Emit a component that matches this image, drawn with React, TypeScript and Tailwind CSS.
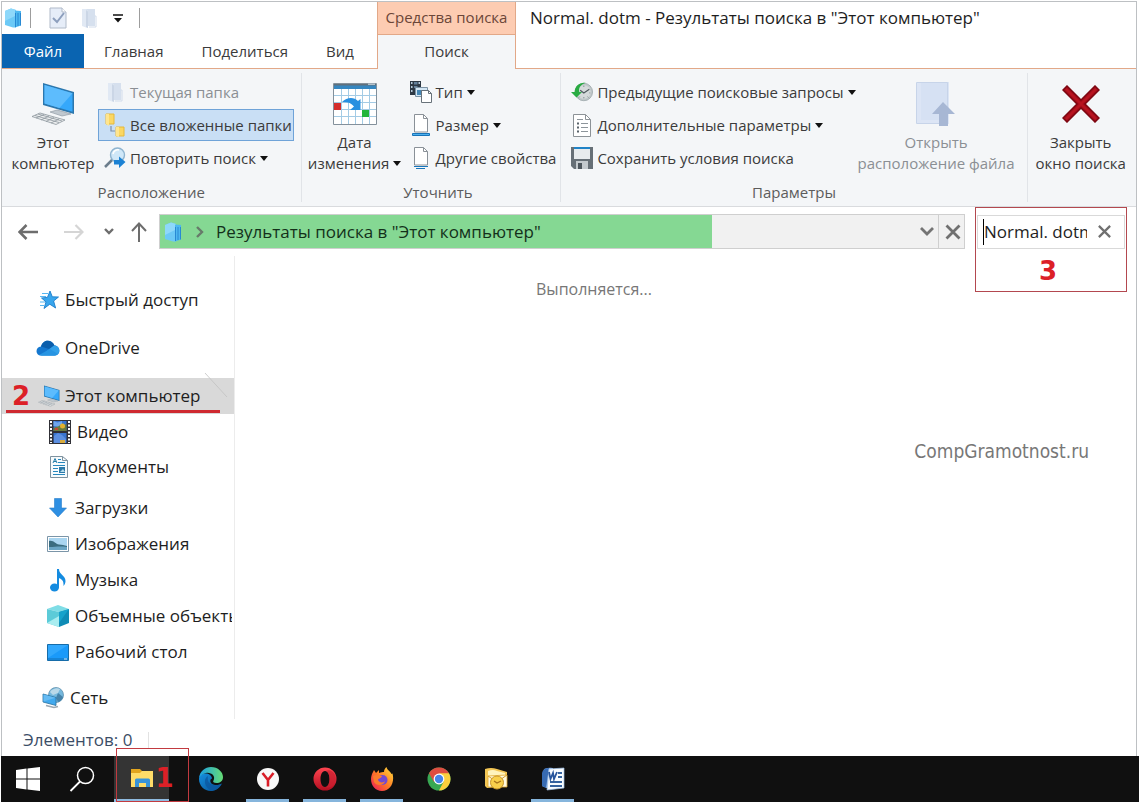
import React from "react";

type IconProps = { className?: string };

const Cube = ({ className = "h-5 w-5" }: IconProps) => (
  <svg viewBox="0 0 18 20" className={className} aria-hidden="true">
    <path d="M1 3 7 .5l5 1.500v17.500L9 19.500 1 17z" fill="#6cc9f6" />
    <path d="M1 3 7 .5l5 1.500L11 8 1 13z" fill="#8ed8fa" />
    <path d="M11 2.500 17 3v14.500l-6 2z" fill="#4db8f0" />
    <path d="M11.500 5v14M14 5v13M16.500 5v12.500" stroke="#1f7ccb" strokeWidth=".8" />
  </svg>
);

const CheckPage = () => (
  <svg viewBox="0 0 18 22" className="h-[22px] w-[18px]" aria-hidden="true">
    <path d="M1 1h12l4 4v16H1z" fill="#e6edf8" stroke="#b0bac9" />
    <path d="M13 1v4h4" fill="#fff" stroke="#b0bac9" />
    <path d="m4 11 4 4 7-9" fill="none" stroke="#8d9fbd" strokeWidth="2" />
  </svg>
);

const PaleFolder = ({ className = "h-5 w-4" }: IconProps) => (
  <svg viewBox="0 0 16 20" className={className} aria-hidden="true">
    <path d="M3 1h11v17H3z" fill="#d6e0ee" />
    <path d="M1 1h4l2 2v17l-2-.500-4-1.500z" fill="#e1e9f4" />
    <path d="M5 2 7 3.500V20l-2-1z" fill="#cbd6e6" />
    <path d="M14 8h1v11H8" fill="none" stroke="#d2dceb" />
  </svg>
);

const Caret = () => (
  <svg viewBox="0 0 8 5" className="h-[5px] w-2 shrink-0" aria-hidden="true">
    <path d="M0 0h8L4 5z" fill="#111" />
  </svg>
);

const Computer = ({ className = "h-11 w-11" }: IconProps) => (
  <svg viewBox="0 0 44 44" className={className} aria-hidden="true">
    <path d="m12 1 31 9v22l-31-9z" fill="#2c77ad" />
    <path d="m13.500 3 28 8.200v18.600l-28-8.200z" fill="#35a8fb" />
    <path d="m13.500 3 28 8.200-13 14.800-15-4.400z" fill="#5dbcfd" />
    <path d="m26 28-7 2 12 4 9-2-8-2.500z" fill="#c0c8cf" stroke="#89949d" strokeWidth=".6" />
    <path d="m9 31 25 7-9 4.500L1 34.500z" fill="#eceeef" stroke="#8c969d" strokeWidth=".8" />
    <path d="m7 32 24 7M4 33.500l24 7M13 32.500l-8 3.500M18 34l-8 4M23 35.500l-8 4M28 37l-8 4" stroke="#8c969d" strokeWidth=".8" />
  </svg>
);

const Subfolders = () => (
  <svg viewBox="0 0 22 26" className="h-[26px] w-[22px]" aria-hidden="true">
    <path d="M2 2h8v10H2zM12 15h8v9h-8z" fill="#fbd763" stroke="#e6b93a" />
    <path d="M2 2h3v12l-3-2zM12 15h3v10l-3-1z" fill="#ffe58e" />
    <path d="M7 14v5h4" fill="none" stroke="#7d8fa8" strokeWidth="1.200" />
  </svg>
);

const SearchAgain = () => (
  <svg viewBox="0 0 22 22" className="h-[22px] w-[22px]" aria-hidden="true">
    <path d="m1 20 8-8" stroke="#6b7d8c" strokeWidth="2.500" />
    <circle cx="13.500" cy="8" r="7" fill="#cfe7f8" stroke="#8fb4d0" strokeWidth="1.400" />
    <path d="M9 7a5 5 0 0 1 6-4" stroke="#fff" strokeWidth="1.500" fill="none" />
    <path d="M10 13h5v-3.500l6.500 5.500-6.500 6v-3.500h-5z" fill="#1c82d4" />
  </svg>
);

const CalendarIcon = () => (
  <svg viewBox="0 0 44 42" className="h-[42px] w-11" aria-hidden="true">
    <path d="M.5.500h43v41H.500z" fill="#fff" stroke="#83909b" />
    <path d="M1 1h42v5H1z" fill="#3586c0" />
    <path d="M1 1h42v1.500H1z" fill="#60707c" />
    <path d="M35 1.200h7" stroke="#dbe6ee" strokeWidth="1" />
    <path d="M8.500 6v35M15.500 6v35M22.500 6v35M29.500 6v35M36.500 6v35M1 12.500h42M1 19.500h42M1 26.500h42M1 33.500h42" stroke="#a3cbe5" />
    <path d="M1 20h7v7H1z" fill="#d42d2c" />
    <path d="M29 27h7v7h-7z" fill="#22b53a" />
    <path d="M9 19c5-5 12-5 16-1l2.500-2v11H17l4-3.500c-3-4-7-5-12-4.500z" fill="#2990e0" />
  </svg>
);

const TypeIcon = () => (
  <svg viewBox="0 0 22 22" className="h-[22px] w-[22px]" aria-hidden="true">
    <path d="M0 0h11v14H0z" fill="#2d3844" />
    <path d="M1 1h1.500v2H1zm0 4h1.500v2H1zm0 4h1.500v2H1zm7.500-8H10v2H8.500z" fill="#b8ccdb" />
    <path d="M4 1h3.500v2.500H4zm0 4h3.500v2H4z" fill="#63809b" />
    <path d="M5.500 6.500h12v9h-12z" fill="#d3e6f4" stroke="#7b92a4" />
    <path d="M7 9h5v5H7z" fill="#4687b4" />
    <path d="M11.500 9.500h7l3 3v9h-10z" fill="#fff" stroke="#68727a" />
    <path d="M18.500 9.500v3h3" fill="none" stroke="#68727a" />
  </svg>
);

const PageLines = ({ lines }: { lines: boolean }) => (
  <svg viewBox="0 0 18 23" className="h-[23px] w-[18px]" aria-hidden="true">
    <path d="M2.500.500h9l4 4v13.500h-13z" fill="#fff" stroke="#8a9198" />
    <path d="M11.500.500v4h4" fill="none" stroke="#8a9198" />
    {lines ? (
      <path d="M2 19.500h14M4 21.500h9" stroke="#1976bb" />
    ) : (
      <path d="M.5 19.500h17v2H.500z" fill="#4db1ef" stroke="#1773b8" />
    )}
  </svg>
);

const HistoryIcon = () => (
  <svg viewBox="0 0 24 22" className="h-[22px] w-6" aria-hidden="true">
    <circle cx="14" cy="11" r="9.500" fill="#c0c8ca" stroke="#a3adb0" />
    <circle cx="14" cy="11" r="7.500" fill="#d5dadb" />
    <path d="m10 9 4 3 6-4" stroke="#4e595e" strokeWidth="1.300" fill="none" />
    <path d="M14 4v1.500M14 16.500V18M20 12h1M18 16l1 1M9.500 16l-1 1" stroke="#7b8589" fill="none" />
    <path d="M0 11h4C4 4 10 0 16 1 11 3 8 6 9 11h3l-6 6z" fill="#29ab43" />
  </svg>
);

const ListPage = () => (
  <svg viewBox="0 0 18 23" className="h-[23px] w-[18px]" aria-hidden="true">
    <path d="M.5.500h12l5 5v17H.500z" fill="#fff" stroke="#8c9297" />
    <path d="M12.500.500v5h5" fill="none" stroke="#8c9297" />
    <path d="M4 5.500h6M8 9.500h7M8 13.500h7M8 17.500h7" stroke="#8d959b" />
    <path d="M4 8.500h2v2H4zM4 12.500h2v2H4zM4 16.500h2v2H4z" fill="#59636b" />
  </svg>
);

const Floppy = () => (
  <svg viewBox="0 0 22 22" className="h-[22px] w-[22px]" aria-hidden="true">
    <path d="M0 0h22v22H3l-3-3z" fill="#666f76" />
    <path d="M3 0h16v12H3z" fill="#e7ebed" />
    <path d="M3 0h16v2H3z" fill="#2083c7" />
    <path d="M5 14h12v8H5z" fill="#c3c9cd" />
    <path d="M7 16h4v6H7z" fill="#4d565d" />
  </svg>
);

const OpenLocation = () => (
  <svg viewBox="0 0 40 46" className="h-[46px] w-10" aria-hidden="true">
    <path d="M1 1h32v42H1z" fill="#dce5f5" />
    <path d="M5 1h27v38H5z" fill="#d6e1f3" />
    <path d="M.5 1.500h31v41H.500z" fill="none" stroke="#c7d4e9" />
    <path d="M27 21 39 33h-7v12h-9V33h-7z" fill="#a7b7d4" />
  </svg>
);

const RedCross = () => (
  <svg viewBox="0 0 38 38" className="h-[38px] w-[38px]" aria-hidden="true">
    <path d="m5 1 14 14L33 1l4 4-14 14 14 14-4 4-14-14L5 37l-4-4 14-14L1 5z" fill="#a80d1b" stroke="#7c0711" strokeWidth="1.500" />
    <path d="m4 4 30 30M34 4 4 34" stroke="#b81521" strokeWidth="2" />
  </svg>
);

const Star = () => (
  <svg viewBox="0 0 20 20" className="h-5 w-5" aria-hidden="true">
    <path d="m11 1 2.300 5.800 6.200.200-4.900 4 2 7-5.800-3.800L5 18.500l2-6.600L2.500 8l6-.700z" fill="#38a6ed" stroke="#1b7dcb" strokeWidth=".9" />
    <path d="M3 3.500h6M1 6.500h6M1 12h5M1 15.500h4" stroke="#56b7f2" strokeWidth="1.200" />
  </svg>
);

const Cloud = () => (
  <svg viewBox="0 0 24 16" className="h-4 w-6" aria-hidden="true">
    <path d="M5 15.500C-1 15.500-1 7 5 6.500 7-1 16-1 18.500 5.500c6 0 7 10 0 10z" fill="#1477cf" />
    <path d="M5 6.500C7-1 16-1 18.500 5.500L13 9z" fill="#0b5eab" />
    <path d="m5 15.500 13-10c7 0 7 10 0 10z" fill="#32a0e9" />
    <path d="m3 15 11-6 8 5q-1 1.500-4 1.500H5z" fill="#2794e2" />
  </svg>
);

const Film = () => (
  <svg viewBox="0 0 22 24" className="h-6 w-[22px]" aria-hidden="true">
    <path d="M0 0h22v24H0z" fill="#303036" />
    <path d="M4.500 1h13v10h-13zM4.500 13h13v10h-13z" fill="#3974d0" />
    <path d="M4.500 8 9 6l4-3 2 2 2.500-1v7h-13z" fill="#687b3f" />
    <path d="m4.500 1 4 1.500L13 1v3L9 6.500 4.500 6z" fill="#6fa6ec" />
    <circle cx="13.500" cy="6" r="2.500" fill="#e3b330" />
    <path d="M6 8h3v2H6z" fill="#c74637" />
    <path d="M5 16l4-3 4 2 4 4v4H5z" fill="#5c8fe0" />
    <path d="M11 20h5v3h-5z" fill="#d8ab3d" />
    <path d="M2 1v22M20 1v22" stroke="#fff" strokeWidth="2" strokeDasharray="2 1.500" />
  </svg>
);

const DocumentIcon = () => (
  <svg viewBox="0 0 18 22" className="h-[22px] w-[18px]" aria-hidden="true">
    <path d="M.5.500h12l5 4v17H.500z" fill="#f7fbfd" stroke="#7e929f" />
    <path d="M12.500.500v4h5" fill="none" stroke="#7e929f" />
    <path d="M8 3.500h3M8 6.500h7M3 9.500h12M3 12.500h5M3 15.500h5M3 18.500h12" stroke="#2788be" />
    <path d="m3 7 2-4.500L7 7M4 5.500h2" fill="none" stroke="#247da9" />
    <path d="M9 11h6v6H9z" fill="#2d79a8" />
    <path d="m10 16 3-3 2 3z" fill="#b6dcec" />
  </svg>
);

const DownArrow = () => (
  <svg viewBox="0 0 18 20" className="h-5 w-[18px]" aria-hidden="true">
    <path d="M5.500.500h7V10h5L9 19 .500 10h5z" fill="#2e8fe2" stroke="#277dcb" strokeWidth=".6" />
  </svg>
);

const Picture = () => (
  <svg viewBox="0 0 22 16" className="h-4 w-[22px]" aria-hidden="true">
    <path d="M.5.500h21v15H.500z" fill="#fff" stroke="#7b95a8" />
    <path d="M2 2h18v12H2z" fill="#a9d5f0" />
    <path d="M2 5c5-1 6 3 10 3.500 3 0 5 1 8 1.500v2H2z" fill="#3a6c7f" />
    <path d="M2 11c7 0 10-1 18 0v3H2z" fill="#6aa5c4" />
  </svg>
);

const Note = () => (
  <svg viewBox="0 0 16 23" className="h-[23px] w-4" aria-hidden="true">
    <ellipse cx="4.500" cy="18.500" rx="4.500" ry="4" fill="#148be0" />
    <path d="M7 0h2c0 6 6.500 6 6.500 12 0 2-1 4-2 5C14 11 11 10 9 9v9.500H7z" fill="#148be0" />
  </svg>
);

const Box3D = () => (
  <svg viewBox="0 0 22 22" className="h-[22px] w-[22px]" aria-hidden="true">
    <path d="M0 4 11 0l11 4-10 3z" fill="#7fdde6" />
    <path d="m0 4 12 3v15L0 18z" fill="#5ccbd8" />
    <path d="m0 18 12-7v11z" fill="#a9edf0" />
    <path d="m12 7 10-3v14l-10 4z" fill="#0f8cb6" />
    <path d="m12 7 10-3-10 14z" fill="#16a2cb" />
  </svg>
);

const Desktop = () => (
  <svg viewBox="0 0 22 17" className="h-[17px] w-[22px]" aria-hidden="true">
    <path d="M.5.500h21v16H.500z" fill="#1a9afa" stroke="#166ca9" />
    <path d="M1 1h20L1 14z" fill="#31a8fd" />
    <path d="M1 15h20" stroke="#1270b5" />
    <path d="M17 15h3" stroke="#d3e8f5" />
  </svg>
);

const Network = () => (
  <svg viewBox="0 0 22 22" className="h-[22px] w-[22px]" aria-hidden="true">
    <circle cx="14" cy="8" r="7.500" fill="#75b8dd" stroke="#5486a5" strokeWidth=".7" />
    <path d="M8 5c3-4 7-4.500 10-3l-2 4-5 2z" fill="#b9d8e8" />
    <path d="m16 6 5 4q-1 4-5 5l-2-4z" fill="#4683aa" />
    <path d="m1 7 13 3.500v8L1 15z" fill="#41a9ee" stroke="#28709d" strokeWidth=".8" />
    <path d="m1.500 7.500 12 3.300-12 3.700z" fill="#66bbf3" />
    <path d="m4 18.500 8 2 4-1" stroke="#9ba8b2" strokeWidth="1.500" fill="none" />
  </svg>
);

const Cross = () => (
  <svg viewBox="0 0 16 16" className="h-4 w-4" aria-hidden="true">
    <path d="m1.500 1.500 13 13M14.500 1.500l-13 13" stroke="#707070" strokeWidth="2.800" />
  </svg>
);

const Windows = () => (
  <svg viewBox="0 0 24 24" className="h-6 w-6" aria-hidden="true">
    <path d="M0 3 10.500 1.600v10H0zM11.500 1.500 24 0v11.600H11.500zM0 12.600h10.500v9.900L0 21zM11.500 12.600H24V24l-12.500-1.500z" fill="#fff" />
  </svg>
);

const TaskSearch = () => (
  <svg viewBox="0 0 26 26" className="h-[26px] w-[26px]" aria-hidden="true">
    <circle cx="16.500" cy="9.500" r="8" fill="none" stroke="#fff" strokeWidth="1.500" />
    <path d="M11 15.500 1.500 25" stroke="#fff" strokeWidth="1.800" />
  </svg>
);

const Explorer = () => (
  <svg viewBox="0 0 24 20" className="h-5 w-6" aria-hidden="true">
    <path d="M1 1h9l2 2h11v16H1z" fill="#e2a51e" />
    <path d="M1 5h9l2-2h11v16H1z" fill="#ffdc68" />
    <path d="M5 19v-7q0-1.500 1.500-1.500h12Q20 10.500 20 12v7h-4v-4H9v4z" fill="#3893d8" />
  </svg>
);

const Edge = () => (
  <svg viewBox="0 0 24 24" className="h-6 w-6" aria-hidden="true">
    <defs>
      <linearGradient id="edge-top" x1="0" x2="1">
        <stop stopColor="#199ee5" />
        <stop offset="1" stopColor="#66dc75" />
      </linearGradient>
      <linearGradient id="edge-low" x1="0" x2="1" y2="1">
        <stop stopColor="#158fe0" />
        <stop offset="1" stopColor="#075192" />
      </linearGradient>
    </defs>
    <path d="M0 12C0 9 3 6 8 6.500c3 .5 5 3 5 5-3 1-2 6 3 6.500 2.500.300 5-.500 7-1.500C20 22 16 24 12 24 5 24 0 18.500 0 12z" fill="url(#edge-low)" />
    <path d="M0 11C1 4 6 0 12 0c7 0 12 5 12 10 0 4-3 6-6.500 6-3 0-4-1-3-2.500C17 9 12 5 7 6c-3 .5-6 3-7 5z" fill="url(#edge-top)" />
    <path d="M9 9c-5 3-4 11 3 14.500 4 .5 8-2 10-6-6 2-12 0-13-4-.300-2-.300-3 0-4.500z" fill="#0b58a0" opacity=".8" />
  </svg>
);

const Yandex = () => (
  <svg viewBox="0 0 22 22" className="h-[22px] w-[22px]" aria-hidden="true">
    <circle cx="11" cy="11" r="11" fill="#f8f8f8" />
    <path d="m5.500 5 5.500 7 5.500-7M11 12v6.500" fill="none" stroke="#d91d27" strokeWidth="2.600" />
  </svg>
);

const Opera = () => (
  <svg viewBox="0 0 24 24" className="h-6 w-6" aria-hidden="true">
    <defs>
      <linearGradient id="opera-red" x2="0" y2="1">
        <stop stopColor="#ff4550" />
        <stop offset="1" stopColor="#b30e20" />
      </linearGradient>
    </defs>
    <path fillRule="evenodd" d="M12 .500a11.500 11.500 0 1 0 0 23 11.500 11.500 0 0 0 0-23zM12 4c3 0 4.500 4 4.500 8s-1.500 8-4.500 8-4.500-4-4.500-8 1.500-8 4.500-8z" fill="url(#opera-red)" />
    <path d="M13 4c3-2 7 0 9 4 2 6-1 12-7 12.500-1 0-1.500 0-2-.500 2.500-1 3.500-4.500 3.500-8S15.500 5 13 4z" fill="#c9202f" opacity=".7" />
  </svg>
);

const Firefox = () => (
  <svg viewBox="0 0 24 24" className="h-6 w-6" aria-hidden="true">
    <defs>
      <linearGradient id="fox" x1="1" x2="0" y2="1">
        <stop stopColor="#ffe33d" />
        <stop offset=".5" stopColor="#ff7a25" />
        <stop offset="1" stopColor="#ed145d" />
      </linearGradient>
    </defs>
    <path d="M3 5 4 3l2 3 3-3v3c2-1 4-1 5-1 0-2 1-4 2.500-5 .5 3 3.500 4 5 7l1-.500C25 16 20 24 12 24 3 24-2 14 3 5z" fill="url(#fox)" />
    <circle cx="12.500" cy="13" r="5" fill="#744ad1" />
    <path d="M3 9c4-2 6 0 9 0-1 3-4 2-4 4 1 3 6 3 7 1-1 5-9 5-11 1z" fill="#fa7c2d" />
  </svg>
);

const Chrome = () => (
  <svg viewBox="0 0 24 24" className="h-6 w-6" aria-hidden="true">
    <circle cx="12" cy="12" r="11.500" fill="#38a853" />
    <path d="M2 6.300a11.500 11.500 0 0 1 20 0L12 12z" fill="#de4d41" />
    <path d="M22 6.300A11.500 11.500 0 0 1 12 23.500L17 14l-5-7.700z" fill="#fbcf3d" />
    <path d="m2 6.300 5 8.700 5-8.700z" fill="#de4d41" />
    <circle cx="12" cy="12" r="5.400" fill="#fff" />
    <circle cx="12" cy="12" r="4.200" fill="#4684e9" />
  </svg>
);

const Outlook = () => (
  <svg viewBox="0 0 24 22" className="h-[22px] w-6" aria-hidden="true">
    <path d="M1 1q6-2 12 0l10 3v5l-1 9-19 2-2-2z" fill="#f3c655" />
    <path d="M4 3q5-2 9 0l8 2v6H4z" fill="#fff3bd" />
    <path d="m4 8 19-1v12H4z" fill="#fff9df" stroke="#dfa72b" strokeWidth=".8" />
    <path d="m4 8 9 6L23 7" fill="none" stroke="#d59e29" />
    <circle cx="13" cy="14.500" r="6.500" fill="#f8cf4b" stroke="#c99628" />
    <path d="m10 13 3 2 4-2" fill="none" stroke="#a6731b" strokeWidth="1.300" />
  </svg>
);

const Word = () => (
  <svg viewBox="0 0 24 24" className="h-6 w-6" aria-hidden="true">
    <path d="M3 2q5-2 9-1L8 22l-7-3z" fill="#8eb5e9" />
    <path d="M1 6q1-5 7-5L5 21l-4-2z" fill="#376bb3" />
    <path d="m8 2 15-1v20L6 23z" fill="#f8fcff" stroke="#9fbfe4" strokeWidth=".7" />
    <path d="M17 5h4v2h-4zm0 4h4v2h-4zm-8 5h12v2H9zm0 4h12v2H9z" fill="#35639f" />
    <path d="m8 5 1.500 7L12 6l1 6 3-7" fill="none" stroke="#27559d" strokeWidth="1.800" />
  </svg>
);

type RibbonItemProps = {
  icon: React.ReactNode;
  label: string;
  menu?: boolean;
  active?: boolean;
  disabled?: boolean;
};

function RibbonItem({ icon, label, menu, active, disabled }: RibbonItemProps) {
  return (
    <button
      type="button"
      disabled={disabled}
      aria-pressed={active}
      className={`flex h-8 items-center gap-1 border pr-px pl-[5px] ${
        active ? "border-[#6fa3d8] bg-[#c9dff5]" : "border-transparent"
      } ${disabled ? "text-[#8b8f94]" : "text-[#3b3b3b]"}`}
    >
      <span className="flex w-[22px] shrink-0 justify-center">{icon}</span>
      <span>{label}</span>
      {menu && <Caret />}
    </button>
  );
}

type BigButtonProps = {
  icon: React.ReactNode;
  lines: [string, string];
  menu?: boolean;
  disabled?: boolean;
};

function BigButton({ icon, lines, menu, disabled }: BigButtonProps) {
  return (
    <button
      type="button"
      disabled={disabled}
      className={`flex shrink-0 flex-col items-center leading-[21px] ${
        disabled ? "text-[#8b8f94]" : "text-[#3b3b3b]"
      }`}
    >
      <span className="flex h-14 items-center justify-center">{icon}</span>
      <span>{lines[0]}</span>
      <span className="flex items-center gap-1">
        {lines[1]}
        {menu && <Caret />}
      </span>
    </button>
  );
}

function RibbonGroup({ label, className, children }: { label: string; className: string; children: React.ReactNode }) {
  return (
    <section className={`my-1 flex flex-col border-r border-[#e1e4e8] ${className}`}>
      <div className="flex flex-1 items-start pt-[3px]">{children}</div>
      <h2 className="h-5 text-center leading-5 text-[#5c5c5c]">{label}</h2>
    </section>
  );
}

function Ribbon() {
  return (
    <div className="flex h-[138px] border-b border-[#d9dbde] bg-[#f4f6f8] text-[15px] whitespace-nowrap">
      <RibbonGroup label="Расположение" className="w-[301px]">
        <div className="flex w-[96px] justify-center pl-1.5">
          <BigButton icon={<Computer />} lines={["Этот", "компьютер"]} />
        </div>
        <div className="flex flex-col items-start gap-px">
          <RibbonItem icon={<PaleFolder />} label="Текущая папка" disabled />
          <RibbonItem icon={<Subfolders />} label="Все вложенные папки" active />
          <RibbonItem icon={<SearchAgain />} label="Повторить поиск" menu />
        </div>
      </RibbonGroup>
      <RibbonGroup label="Уточнить" className="w-[261px] [&>h2]:pl-3.5">
        <div className="flex w-[102px] justify-center pl-1">
          <BigButton icon={<CalendarIcon />} lines={["Дата", "изменения"]} menu />
        </div>
        <div className="flex flex-col items-start gap-px">
          <RibbonItem icon={<TypeIcon />} label="Тип" menu />
          <RibbonItem icon={<PageLines lines={false} />} label="Размер" menu />
          <RibbonItem icon={<PageLines lines />} label="Другие свойства" />
        </div>
      </RibbonGroup>
      <RibbonGroup label="Параметры" className="flex-1">
        <div className="flex flex-1 flex-col items-start gap-px pl-1">
          <RibbonItem icon={<HistoryIcon />} label="Предыдущие поисковые запросы" menu />
          <RibbonItem icon={<ListPage />} label="Дополнительные параметры" menu />
          <RibbonItem icon={<Floppy />} label="Сохранить условия поиска" />
        </div>
        <div className="pr-3">
          <BigButton icon={<OpenLocation />} lines={["Открыть", "расположение файла"]} disabled />
        </div>
      </RibbonGroup>
      <section className="flex w-[109px] justify-center pt-[7px] pr-0.5">
        <BigButton icon={<RedCross />} lines={["Закрыть", "окно поиска"]} />
      </section>
    </div>
  );
}

function Header() {
  const tab = "px-5 text-[#3b3b3b]";
  return (
    <header className="flex h-[67px] text-[15px] whitespace-nowrap">
      <div className="flex w-[375px] shrink-0 flex-col border-b border-[#e2a888]">
        <div className="flex h-8 items-center">
          <div className="pl-0.5">
            <Cube className="h-5 w-[18px]" />
          </div>
          <span className="ml-2 h-5 w-px bg-[#9d9d9d]" />
          <button type="button" aria-label="Свойства" className="ml-[18px]">
            <CheckPage />
          </button>
          <button type="button" aria-label="Новая папка" className="ml-3.5">
            <PaleFolder />
          </button>
          <button type="button" aria-label="Настройка панели быстрого доступа" className="ml-4">
            <svg viewBox="0 0 10 9" className="h-[9px] w-2.5" aria-hidden="true">
              <path d="M0 1h10" stroke="#111" strokeWidth="1.500" />
              <path d="M1 4h8L5 8.500z" fill="#111" />
            </svg>
          </button>
          <span className="ml-4 h-5 w-px bg-[#9d9d9d]" />
        </div>
        <nav className="flex h-[34px]">
          <button type="button" className="w-[82px] bg-[#0a64b1] text-white">Файл</button>
          <button type="button" className={tab}>Главная</button>
          <button type="button" className="px-[18px] text-[#3b3b3b]">Поделиться</button>
          <button type="button" className={tab}>Вид</button>
        </nav>
      </div>
      <div className="flex w-[139px] shrink-0 flex-col border-x border-[#e2a888]">
        <div className="h-8 bg-[#fdccb2] text-center leading-[30px] text-[#6b4638]">Средства поиска</div>
        <button type="button" className="flex-1 border-t border-[#e2a888] bg-[#f4f6f8] pb-0.5 text-[#3b3b3b]">
          Поиск
        </button>
      </div>
      <h1 className="flex-1 border-b border-[#e2a888] pl-3.5 text-[17px] leading-8 text-[#1e1e1e]">
        Normal. dotm - Результаты поиска в "Этот компьютер"
      </h1>
    </header>
  );
}

function AddressRow() {
  return (
    <div className="flex h-[49px] items-center pr-[11px] text-[17px]">
      <div className="flex w-[157px] shrink-0 items-center">
        <button type="button" aria-label="Назад" className="ml-4">
          <svg viewBox="0 0 20 16" className="h-4 w-5" fill="none" stroke="#6d6d6d" strokeWidth="2.500" aria-hidden="true">
            <path d="M20 8H2M8.500 1 1.500 8l7 7" />
          </svg>
        </button>
        <button type="button" aria-label="Вперед" className="ml-[26px]" disabled>
          <svg viewBox="0 0 20 16" className="h-4 w-5" fill="none" stroke="#d5d5d5" strokeWidth="2.200" aria-hidden="true">
            <path d="M0 8h18M11.500 1l7 7-7 7" />
          </svg>
        </button>
        <button type="button" aria-label="Последние расположения" className="ml-5">
          <svg viewBox="0 0 10 7" className="h-[7px] w-2.5" fill="none" stroke="#6d6d6d" strokeWidth="2.400" aria-hidden="true">
            <path d="m1 1 4 4 4-4" />
          </svg>
        </button>
        <button type="button" aria-label="Вверх" className="ml-4">
          <svg viewBox="0 0 18 20" className="h-5 w-[18px]" fill="none" stroke="#6d6d6d" strokeWidth="2" aria-hidden="true">
            <path d="M9 20V2M2 9l7-7.500L16 9" />
          </svg>
        </button>
      </div>
      <div className="flex h-[35px] min-w-0 flex-1 border border-[#cfcfcf] bg-[#f1f1f1]">
        <div className="flex min-w-0 flex-1 items-center">
          <div className="flex h-full w-[73%] items-center bg-[#85d893] pl-1 whitespace-nowrap text-[#13301a]">
            <Cube className="h-5 w-[18px]" />
            <svg viewBox="0 0 8 12" className="ml-3.5 h-3 w-2" fill="none" stroke="#677a6a" strokeWidth="2.400" aria-hidden="true">
              <path d="m1 1 5 5-5 5" />
            </svg>
            <span className="ml-3">Результаты поиска в "Этот компьютер"</span>
          </div>
        </div>
        <button type="button" aria-label="Показать журнал адресов" className="px-1">
          <svg viewBox="0 0 14 9" className="h-[9px] w-3.5" fill="none" stroke="#747474" strokeWidth="2.800" aria-hidden="true">
            <path d="m1 1 6 6 6-6" />
          </svg>
        </button>
        <button type="button" aria-label="Остановить" className="border-l border-[#cfcfcf] pr-[3px] pl-1.5">
          <Cross />
        </button>
      </div>
      <div className="relative ml-3 flex h-[34px] w-[148px] shrink-0 items-center border border-[#d9d9d9] pl-[5px]">
        <span className="h-[26px] w-px bg-black" />
        <input
          type="text"
          aria-label="Поиск"
          defaultValue="Normal. dotm"
          className="w-[103px] min-w-0 bg-transparent text-[#1e1e1e] outline-none"
        />
        <button type="button" aria-label="Очистить" className="ml-2.5">
          <svg viewBox="0 0 16 16" className="h-[15px] w-[15px]" aria-hidden="true">
            <path d="m2 2 12 12M14 2 2 14" stroke="#707070" strokeWidth="2.400" />
          </svg>
        </button>
        <div className="pointer-events-none absolute -top-[9px] -right-[3px] -left-[3px] flex h-[85px] items-end justify-center border border-[#b3484f] pr-1.5 pb-[3px]">
          <Marker>3</Marker>
        </div>
      </div>
    </div>
  );
}

function Marker({ children }: { children: React.ReactNode }) {
  return (
    <span className="font-['DejaVu_Sans',sans-serif] text-[26px] leading-[34px] font-bold text-[#dc2027]">{children}</span>
  );
}

function TreeItem({ icon, label, className }: { icon: React.ReactNode; label: string; className: string }) {
  return (
    <li>
      <a href="#" className={`flex items-center overflow-hidden ${className}`}>
        <span className="flex w-7 shrink-0 items-center justify-center">{icon}</span>
        <span>{label}</span>
      </a>
    </li>
  );
}

function Sidebar() {
  return (
    <nav className="w-[233px] shrink-0 border-r border-[#ececec] pt-[26px] text-[17px] whitespace-nowrap text-[#1e1e1e]">
      <ul>
        <TreeItem icon={<Star />} label="Быстрый доступ" className="h-9 gap-0.5 pl-[33px]" />
        <TreeItem icon={<Cloud />} label="OneDrive" className="mt-3 h-9 gap-[3px] pl-8" />
        <li className="relative mt-3 h-9 bg-[#d9d9d9]">
          <a href="#" className="flex h-full items-center gap-0.5 pl-[33px]">
            <span className="flex w-7 shrink-0 justify-center">
              <Computer className="h-[22px] w-6" />
            </span>
            <span>Этот компьютер</span>
          </a>
          <span className="pointer-events-none absolute right-3.5 bottom-px left-1 flex h-[31px] items-end border-b-[3px] border-[#cf2a31] pl-1.5">
            <span className="h-[31px]">
              <Marker>2</Marker>
            </span>
          </span>
          <svg viewBox="0 0 24 26" className="absolute -top-1.5 right-1.5 h-[26px] w-6" aria-hidden="true">
            <path d="m1 1 22 24" stroke="#c2c2c2" strokeWidth=".8" />
          </svg>
        </li>
        <TreeItem icon={<Film />} label="Видео" className="h-[35px] gap-[3px] pl-[44px]" />
        <TreeItem icon={<DocumentIcon />} label="Документы" className="h-[35px] gap-[3px] pl-[43px]" />
        <TreeItem icon={<DownArrow />} label="Загрузки" className="mt-1.5 h-9 gap-[3px] pl-[42px]" />
        <TreeItem icon={<Picture />} label="Изображения" className="h-9 gap-[3px] pl-[42px]" />
        <TreeItem icon={<Note />} label="Музыка" className="h-9 gap-[3px] pl-[42px]" />
        <TreeItem icon={<Box3D />} label="Объемные объекты" className="mr-0.5 h-9 gap-[3px] pl-[42px]" />
        <TreeItem icon={<Desktop />} label="Рабочий стол" className="h-9 gap-[3px] pl-[42px]" />
        <TreeItem icon={<Network />} label="Сеть" className="mt-2.5 h-9 gap-[3px] pl-[37px]" />
      </ul>
    </nav>
  );
}

const apps = [
  { name: "Microsoft Edge", icon: <Edge />, open: false },
  { name: "Яндекс.Браузер", icon: <Yandex />, open: true },
  { name: "Opera", icon: <Opera />, open: true },
  { name: "Firefox", icon: <Firefox />, open: true },
  { name: "Chrome", icon: <Chrome />, open: false },
  { name: "Outlook", icon: <Outlook />, open: false },
  { name: "Word", icon: <Word />, open: true },
];

function Taskbar() {
  return (
    <footer className="ml-px flex h-[46px] shrink-0 bg-[#101010]">
      <button type="button" aria-label="Пуск" className="flex w-[54px] items-center justify-center">
        <Windows />
      </button>
      <button type="button" aria-label="Поиск" className="flex w-[59px] items-center justify-center pr-1.5">
        <TaskSearch />
      </button>
      <div className="relative w-[68px]">
        <button
          type="button"
          aria-label="Проводник"
          className="flex h-full w-[55px] items-center justify-center border-b-[3px] border-[#8fbbe0] bg-[#343434]"
        >
          <Explorer />
        </button>
        <div className="pointer-events-none absolute -top-2 bottom-0 left-0.5 flex w-[73px] items-center justify-center border border-[#c23a40] pt-1.5 pl-6">
          <Marker>1</Marker>
        </div>
      </div>
      {apps.map((app) => (
        <button
          key={app.name}
          type="button"
          aria-label={app.name}
          className="flex h-full w-[57px] flex-col items-center"
        >
          <span className="flex flex-1 items-center pt-[3px]">{app.icon}</span>
          <span className={`h-[3px] w-[43px] ${app.open ? "bg-[#86b5dc]" : "bg-transparent"}`} />
        </button>
      ))}
    </footer>
  );
}

export default function App() {
  return (
    <div className="flex min-h-screen flex-col bg-white pt-px pb-px font-['Open_Sans','Noto_Sans',sans-serif]">
      <div className="mr-0.5 ml-px flex flex-1 flex-col border border-b-0 border-[#bdc0c3]">
        <Header />
        <Ribbon />
        <AddressRow />
        <div className="flex flex-1">
          <Sidebar />
          <main className="flex-1 pt-[21px]">
            <p className="pl-[301px] text-[16px] leading-6 text-[#777]">Выполняется...</p>
            <p className="mt-[136px] pr-[47px] text-right font-['DejaVu_Sans_Condensed','DejaVu_Sans',sans-serif] text-[19px] leading-7 text-[#777]">
              CompGramotnost.ru
            </p>
          </main>
        </div>
        <div className="flex h-[37px] items-center pt-1 pl-[21px] text-[17px] text-[#3b4d66]">
          <span>Элементов: 0</span>
          <span className="ml-4 h-4 w-px bg-[#e2e2e2]" />
        </div>
      </div>
      <Taskbar />
    </div>
  );
}
